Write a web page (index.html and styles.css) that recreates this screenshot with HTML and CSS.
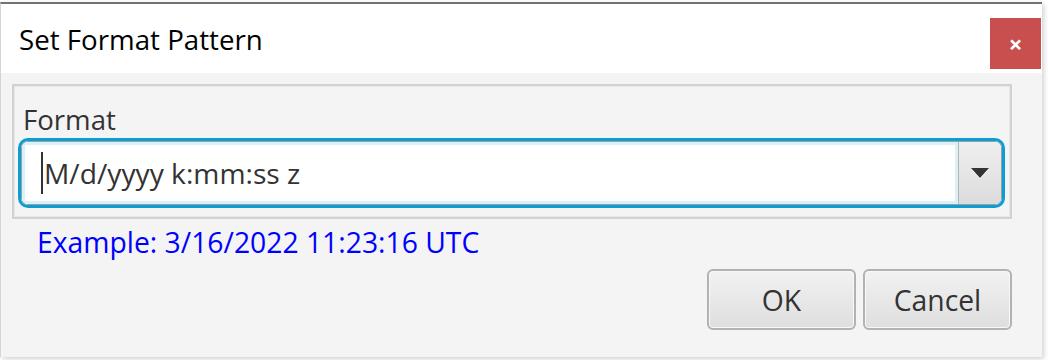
FILE: index.html
```html
<!DOCTYPE html>
<html>
<head>
<meta charset="utf-8">
<link rel="stylesheet" href="styles.css">
</head>
<body>
<div class="window">
  <div class="titlebar">
    <div class="title">Set Format Pattern</div>
    <div class="close">×</div>
  </div>
  <div class="content">
    <div class="group">
      <div class="label">Format</div>
      <div class="combo">
        <div class="combo-inner">
          <div class="field"><span class="caret"></span><span class="value">M/d/yyyy k:mm:ss z</span></div>
          <div class="arrow-btn"><span class="arrow"></span></div>
        </div>
      </div>
    </div>
    <div class="example">Example: 3/16/2022 11:23:16 UTC</div>
    <div class="buttons">
      <button class="btn">OK</button>
      <button class="btn">Cancel</button>
    </div>
  </div>
</div>
</body>
</html>
```
FILE: styles.css
```css
html, body {
  margin: 0;
  padding: 0;
  background: #ffffff;
}
body {
  width: 1048px;
  height: 360px;
  overflow: hidden;
  font-family: "Open Sans", "Noto Sans", sans-serif;
}
.window {
  margin-top: 2px;
  width: 1042px;
  height: 355px;
  border-top: 2px solid #727272;
  border-left: 1px solid #d4d4d4;
  box-sizing: border-box;
  display: flex;
  flex-direction: column;
  box-shadow: 2px 2px 5px rgba(0,0,0,0.18);
  background: #f4f4f4;
}
.titlebar {
  height: 69px;
  flex: none;
  background: #ffffff;
  display: flex;
  align-items: flex-end;
  justify-content: space-between;
  padding-bottom: 4px;
  box-sizing: border-box;
}
.title {
  align-self: center;
  padding-left: 18px;
  font-size: 27.7px;
  line-height: 34px;
  color: #000;
  margin-top: 4px;
}
.close {
  width: 51px;
  height: 51px;
  background: #c84f4e;
  color: #fff;
  font-size: 24px;
  font-weight: bold;
  display: flex;
  align-items: center;
  justify-content: center;
  line-height: 1;
  margin-right: 1px;
}
.content {
  flex: 1;
  display: flex;
  flex-direction: column;
  padding: 11px 30px 0 11px;
}
.group {
  border: 2px solid #d2d2d2;
  box-shadow: inset 0 0 0 1px #e9e9e9;
  padding: 17px 5px 9px 4px;
}
.label {
  font-size: 27.6px;
  color: #333;
  line-height: 32px;
  padding-left: 5px;
  margin-bottom: 3px;
}
.combo {
  border: 3px solid #0a9fd4;
  border-radius: 10px;
  height: 70px;
  box-sizing: border-box;
  display: flex;
}
.combo-inner {
  flex: 1;
  display: flex;
  border: 1px solid #9e9e9e;
  border-radius: 7px;
  overflow: hidden;
}
.field {
  flex: 1;
  background: #fff;
  box-shadow: inset 0 0 0 3px #dcf0f8;
  display: flex;
  align-items: center;
  padding-left: 19px;
  font-size: 28.2px;
  color: #333;
}
.caret {
  width: 2px;
  height: 42px;
  background: #333;
  margin-right: 1px;
}
.arrow-btn {
  width: 42px;
  border-left: 1px solid #b4b4b4;
  background: linear-gradient(#efefef, #dcdcdc);
  display: flex;
  align-items: center;
  justify-content: center;
}
.arrow {
  width: 0;
  height: 0;
  border-left: 9px solid transparent;
  border-right: 9px solid transparent;
  border-top: 10px solid #333;
  filter: drop-shadow(0 1px 0 #fff);
}
.example {
  font-size: 28.3px;
  color: #0000ff;
  padding-left: 25px;
  margin-top: 6px;
  line-height: 34px;
}
.buttons {
  display: flex;
  justify-content: flex-end;
  gap: 7px;
  margin-top: 10px;
}
.btn {
  width: 149px;
  height: 61px;
  border: 2px solid #b2b2b2;
  border-radius: 6px;
  background: linear-gradient(#f2f2f2, #dedede);
  box-shadow: inset 0 0 0 1px #f8f8f8;
  font-family: "Open Sans", "Noto Sans", sans-serif;
  font-size: 28.3px;
  color: #333;
  padding: 0;
}
```
